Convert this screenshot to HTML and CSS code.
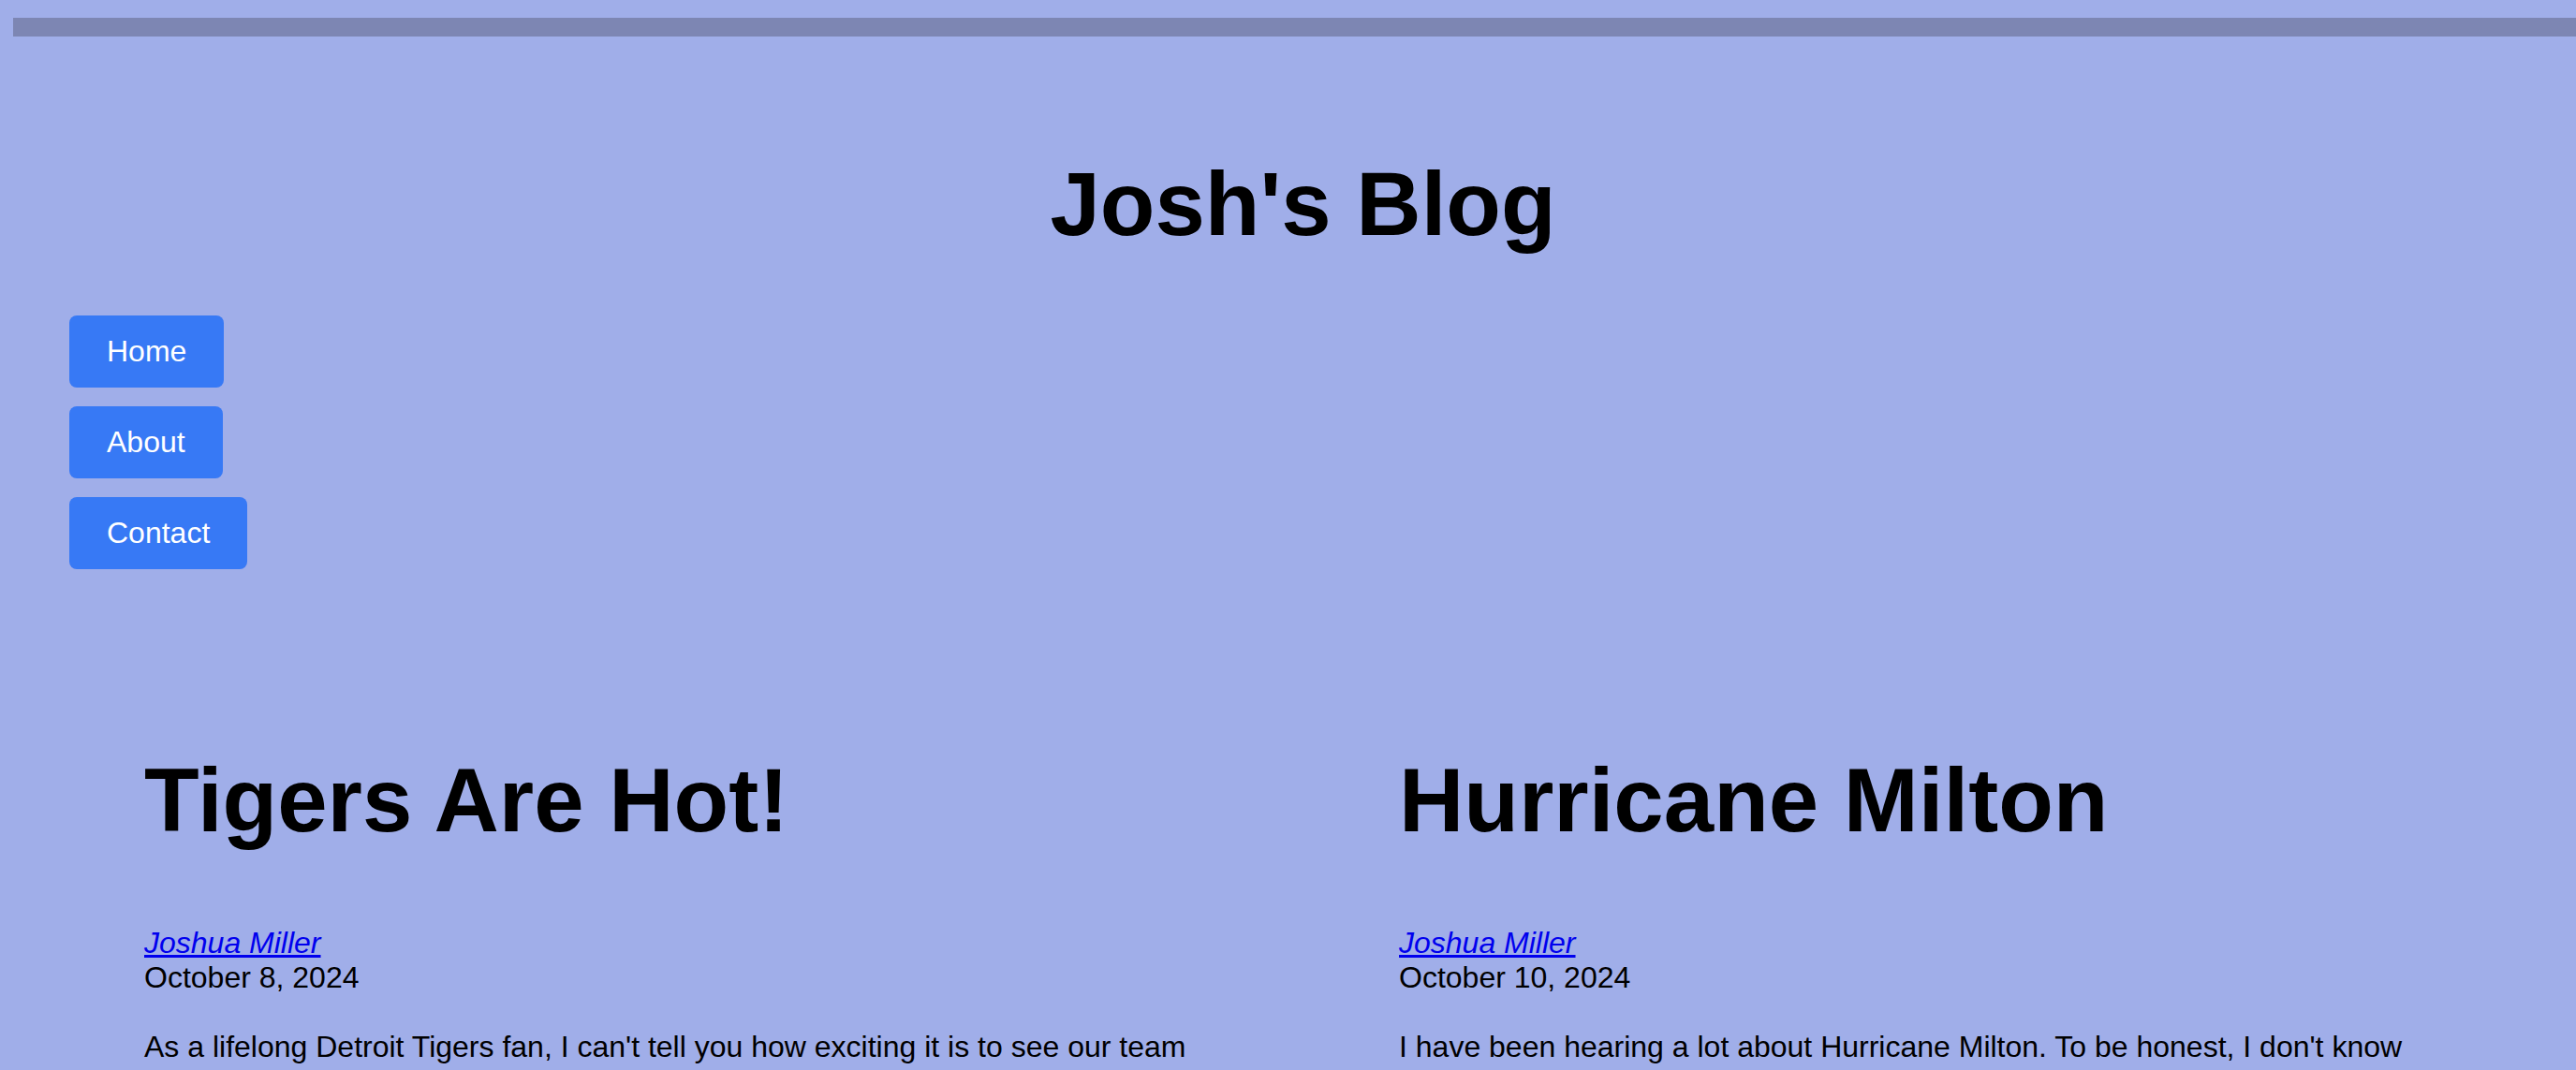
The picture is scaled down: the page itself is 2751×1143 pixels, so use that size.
FILE: index.html
```html
<!DOCTYPE html>
<html lang="en">
<head>
<meta charset="utf-8">
<title>Josh's Blog</title>
<link rel="stylesheet" href="styles.css">
</head>
<body>
<header class="site-header">
  <div class="top-bar"></div>
  <h1 class="site-title">Josh's Blog</h1>
  <nav class="site-nav">
    <a class="nav-btn" href="#">Home</a>
    <a class="nav-btn" href="#">About</a>
    <a class="nav-btn" href="#">Contact</a>
  </nav>
</header>
<main class="posts">
  <article class="post">
    <h2 class="post-title">Tigers Are Hot!</h2>
    <address class="post-author"><a href="#">Joshua Miller</a></address>
    <div class="post-date">October 8, 2024</div>
    <p class="post-body">As a lifelong Detroit Tigers fan, I can't tell you how exciting it is to see our team playing meaningful baseball in October again. The energy at Comerica Park has been electric all season long.</p>
  </article>
  <article class="post">
    <h2 class="post-title">Hurricane Milton</h2>
    <address class="post-author"><a href="#">Joshua Miller</a></address>
    <div class="post-date">October 10, 2024</div>
    <p class="post-body">I have been hearing a lot about Hurricane Milton. To be honest, I don't know anything about hurricanes beyond what I see on the news, but I hope everyone in Florida stays safe.</p>
  </article>
</main>
</body>
</html>
```

FILE: styles.css
```css
html {
  overflow: hidden;
  background: #a0aee9;
}

body {
  margin: 0;
  background: #a0aee9;
  color: #000;
  font-family: "Liberation Sans", Arial, Helvetica, sans-serif;
}

.site-header {
  display: flex;
  flex-direction: column;
}

.top-bar {
  height: 20px;
  margin: 19px 0 0 14px;
  background: #7d86b3;
}

.site-title {
  margin: 124px 0 64px;
  padding-left: 32px;
  font-size: 96px;
  font-weight: bold;
  line-height: normal;
  text-align: center;
}

.site-nav {
  display: flex;
  flex-direction: column;
  align-items: flex-start;
  gap: 20px;
  padding-left: 74px;
}

.nav-btn {
  display: inline-block;
  padding: 20px 40px;
  background: #3779f5;
  color: #fff;
  font-size: 32px;
  line-height: normal;
  text-decoration: none;
  border-radius: 8px;
}

.posts {
  display: grid;
  grid-template-columns: 1340px 1340px;
  margin-top: 192px;
  padding-left: 74px;
}

.post {
  padding: 0 80px;
  font-size: 32px;
  line-height: normal;
}

.post-title {
  margin: 0 0 79px;
  font-size: 96px;
  font-weight: bold;
  line-height: normal;
}

.post-author {
  font-style: italic;
}

.post-author a {
  color: #0000ee;
}

.post-date {
  margin: 0;
}

.post-body {
  margin: 37px 0 0;
}
```
